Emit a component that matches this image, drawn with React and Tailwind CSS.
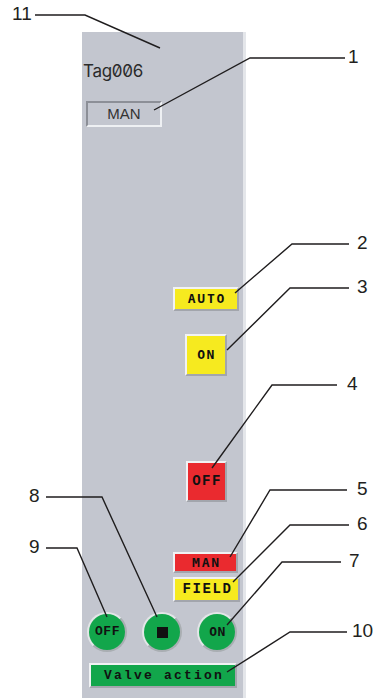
import React from "react";

const callouts = [
  { n: "11", pts: "35,15 85,15 160,48", x: 12, y: 15 },
  { n: "1", pts: "345,58 250,58 154,110", x: 348, y: 58 },
  { n: "2", pts: "349,244 292,244 235,293", x: 357, y: 244 },
  { n: "3", pts: "349,288 290,288 227,350", x: 357, y: 288 },
  { n: "4", pts: "337,385 272,385 212,468", x: 347, y: 385 },
  { n: "5", pts: "347,490 270,490 230,557", x: 357, y: 490 },
  { n: "6", pts: "349,525 290,525 233,582", x: 357, y: 525 },
  { n: "7", pts: "341,562 282,562 227,625", x: 349, y: 562 },
  { n: "8", pts: "46,497 102,497 157,617", x: 29, y: 497 },
  { n: "9", pts: "46,548 77,548 107,617", x: 29, y: 548 },
  { n: "10", pts: "347,632 290,632 227,672", x: 352, y: 632 },
];

// bevelled faceplate button look
const raised =
  "border-2 border-t-[#f1f2f4] border-l-[#f1f2f4] border-b-[#a2a5ac] border-r-[#a2a5ac]";
const sansBtn = "font-['DejaVu_Sans_Mono',monospace] font-bold text-[#111]";
const slabBtn = "font-['Liberation_Mono',monospace] font-bold text-[#111]";
const circle =
  "flex h-[40px] w-[40px] items-center justify-center rounded-full border-2 border-[#e3e6e8] border-b-[#a9aeb2] border-r-[#a9aeb2] bg-[#12a64b]";

const Face = () => (
  <div className="ml-[82px] mt-[32px] flex h-[666px] w-[164px] flex-col border-r-[3px] border-r-[#e4e6ea] bg-[#c3c6cf]">
    <div className="ml-[1px] mt-[29px] h-5 font-['Inter',sans-serif] text-[17px] leading-5 tracking-[-0.3px] text-[#2b2b2b] slashed-zero">
      Tag006
    </div>

    <div className="ml-[4px] mt-[20px] flex h-[26px] w-[76px] items-center justify-center border-2 border-t-[#8c8f97] border-l-[#8c8f97] border-b-[#eef0f3] border-r-[#eef0f3] font-['Liberation_Sans',sans-serif] text-[15px] text-[#333]">
      MAN
    </div>

    <div className={`ml-[91px] mt-[160px] flex h-[24px] w-[66px] items-center justify-center bg-[#f6ea1f] pl-[2px] text-[13px] tracking-[1.8px] ${sansBtn} ${raised}`}>
      AUTO
    </div>

    <div className={`ml-[103px] mt-[23px] flex h-[42px] w-[42px] items-center justify-center bg-[#f6ea1f] pl-[1px] text-[13px] tracking-[1.5px] ${sansBtn} ${raised}`}>
      ON
    </div>

    <div className={`ml-[104px] mt-[85px] flex h-[41px] w-[41px] items-center justify-center bg-[#ea2a2f] pl-[1px] text-[14px] tracking-[1.5px] ${slabBtn} ${raised}`}>
      OFF
    </div>

    <div className={`ml-[91px] mt-[50px] flex h-[21px] w-[65px] items-center justify-center bg-[#ea2a2f] pl-[2px] text-[13px] tracking-[1.8px] ${sansBtn} ${raised}`}>
      MAN
    </div>

    <div className={`ml-[91px] mt-[4px] flex h-[25px] w-[67px] items-center justify-center bg-[#f6ea1f] pl-[2px] text-[14px] tracking-[1.6px] ${slabBtn} ${raised}`}>
      FIELD
    </div>

    <div className="ml-[5px] mt-[10px] flex gap-[15px]">
      <div className={`${circle} pl-[1px] text-[13px] tracking-[0.5px] ${slabBtn}`}>OFF</div>
      <div className={circle}>
        <div className="h-[11px] w-[11px] bg-[#111]" />
      </div>
      <div className={`${circle} pl-[1px] text-[13px] tracking-[0.5px] ${sansBtn}`}>ON</div>
    </div>

    <div className={`ml-[7px] mt-[11px] flex h-[25px] w-[148px] items-center justify-center bg-[#12a64b] pl-[2px] text-[13px] tracking-[2.2px] ${slabBtn} ${raised}`}>
      Valve action
    </div>
  </div>
);

export default function App() {
  return (
    <div className="relative h-[698px] w-[374px] overflow-hidden bg-white">
      <Face />

      <svg className="absolute inset-0" width="374" height="698" viewBox="0 0 374 698">
        {callouts.map((c) => (
          <polyline key={c.n} points={c.pts} fill="none" stroke="#1f1d1e" strokeWidth="1.4" />
        ))}
      </svg>

      {callouts.map((c) => (
        <span
          key={c.n}
          className="absolute font-['Liberation_Sans',Arial,sans-serif] text-[19px] leading-[20px] text-[#231f20]"
          style={{ left: c.x, top: c.y - 11 }}
        >
          {c.n}
        </span>
      ))}
    </div>
  );
}
